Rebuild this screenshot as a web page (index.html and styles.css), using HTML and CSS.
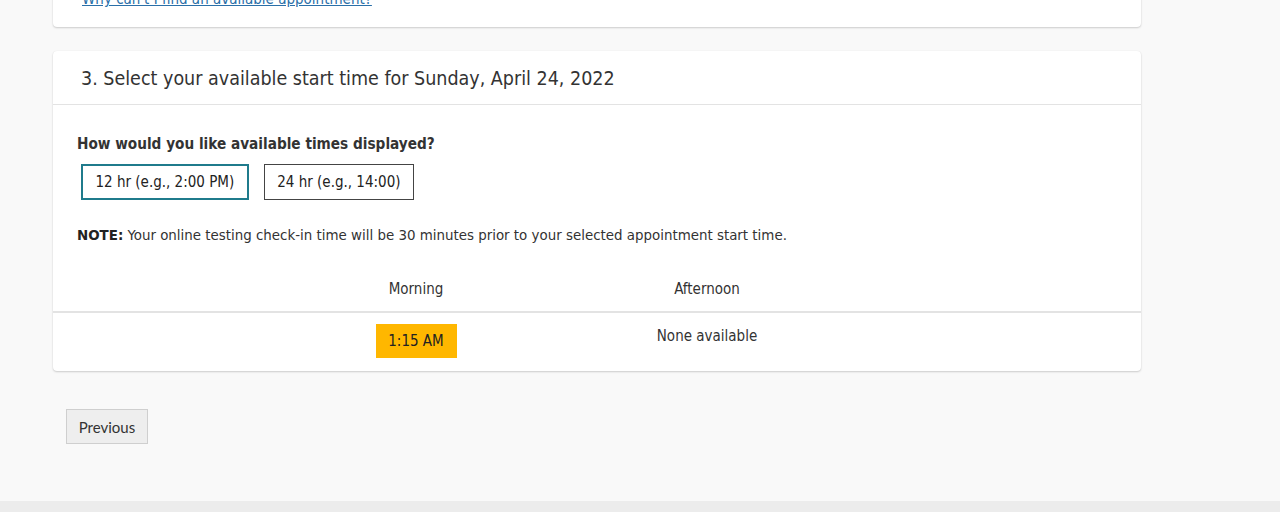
FILE: index.html
```html
<!DOCTYPE html>
<html>
<head>
<meta charset="utf-8">
<link rel="stylesheet" href="styles.css">
</head>
<body>
<div class="page">
  <main class="main">
    <section class="card card-top">
      <a class="help-link" href="#">Why can't I find an available appointment?</a>
    </section>

    <section class="card">
      <header class="card-head">3. Select your available start time for Sunday, April 24, 2022</header>
      <div class="card-body">
        <div class="question">How would you like available times displayed?</div>
        <div class="fmt-row">
          <button class="fmt fmt-active">12 hr (e.g., 2:00 PM)</button>
          <button class="fmt">24 hr (e.g., 14:00)</button>
        </div>
        <p class="note"><b>NOTE:</b> Your online testing check-in time will be 30 minutes prior to your selected appointment start time.</p>
      </div>
      <div class="times">
        <div class="times-head">
          <span></span>
          <span class="col">Morning</span>
          <span class="col">Afternoon</span>
          <span></span>
        </div>
        <div class="times-row">
          <span></span>
          <span class="col"><button class="slot">1:15 AM</button></span>
          <span class="col none">None available</span>
          <span></span>
        </div>
      </div>
    </section>

    <div class="actions">
      <button class="prev">Previous</button>
    </div>
  </main>
  <footer class="footer"></footer>
</div>
</body>
</html>
```

FILE: styles.css
```css
* { box-sizing: border-box; }
html, body { margin: 0; padding: 0; }
body {
  background: #f9f9f9;
  font-family: "DejaVu Sans Condensed", "DejaVu Sans", sans-serif;
  color: #333;
  height: 512px;
  overflow: hidden;
}
.page {
  display: flex;
  flex-direction: column;
  height: 512px;
}
.main {
  flex: 1;
  padding-left: 53px;
  width: 1141px;
  margin-top: -15px;
}
.card {
  background: #fff;
  border-radius: 4px;
  box-shadow: 0 1px 2px rgba(0,0,0,0.18), 0 0 1px rgba(0,0,0,0.08);
}
.card-top {
  padding: 4px 29px 19px;
  margin-bottom: 24px;
}
.help-link {
  font-size: 15px;
  color: #2a6fa8;
  text-decoration: underline;
}
.card-head {
  height: 54px;
  padding: 2px 28px 0;
  display: flex;
  align-items: center;
  font-size: 19.5px;
  color: #333;
  border-bottom: 1px solid #e3e3e3;
}
.card-body {
  padding: 29px 24px 0;
}
.question {
  font-weight: bold;
  font-size: 15.2px;
  color: #333;
  line-height: 20px;
}
.fmt-row {
  display: flex;
  gap: 15px;
  margin-top: 10px;
  padding-left: 4px;
}
.fmt {
  font-family: inherit;
  font-size: 15px;
  color: #222;
  background: #fff;
  border: 1px solid #444;
  height: 36px;
  padding: 0 12.5px;
}
.fmt-active {
  border: 2px solid #1f7b8c;
  padding: 0 12.5px;
}
.note {
  margin: 26px 0 0;
  font-size: 14.9px;
  line-height: 18px;
  color: #333;
}
.note b { color: #222; }
.times { margin-top: 36px; }
.times-head, .times-row {
  display: grid;
  grid-template-columns: 218px 290px 292px 1fr;
}
.times-head {
  height: 33px;
  border-bottom: 2px solid #e3e3e3;
  font-size: 15px;
  align-items: start;
}
.times-row {
  height: 58px;
  align-items: start;
  padding-top: 11px;
  font-size: 15px;
}
.col { text-align: center; }
.none { padding-top: 3px; }
.slot {
  font-family: inherit;
  font-size: 15px;
  color: #222;
  background: #ffb700;
  border: none;
  height: 34px;
  width: 81px;
  padding: 0;
}
.actions {
  padding: 38px 0 0 13px;
}
.prev {
  font-family: Lato, sans-serif;
  font-size: 15px;
  color: #333;
  background: #eeeeee;
  border: 1px solid #cfcfcf;
  height: 35px;
  width: 82px;
  padding: 0;
}
.footer {
  flex: none;
  height: 11px;
  background: #ececec;
}
```
